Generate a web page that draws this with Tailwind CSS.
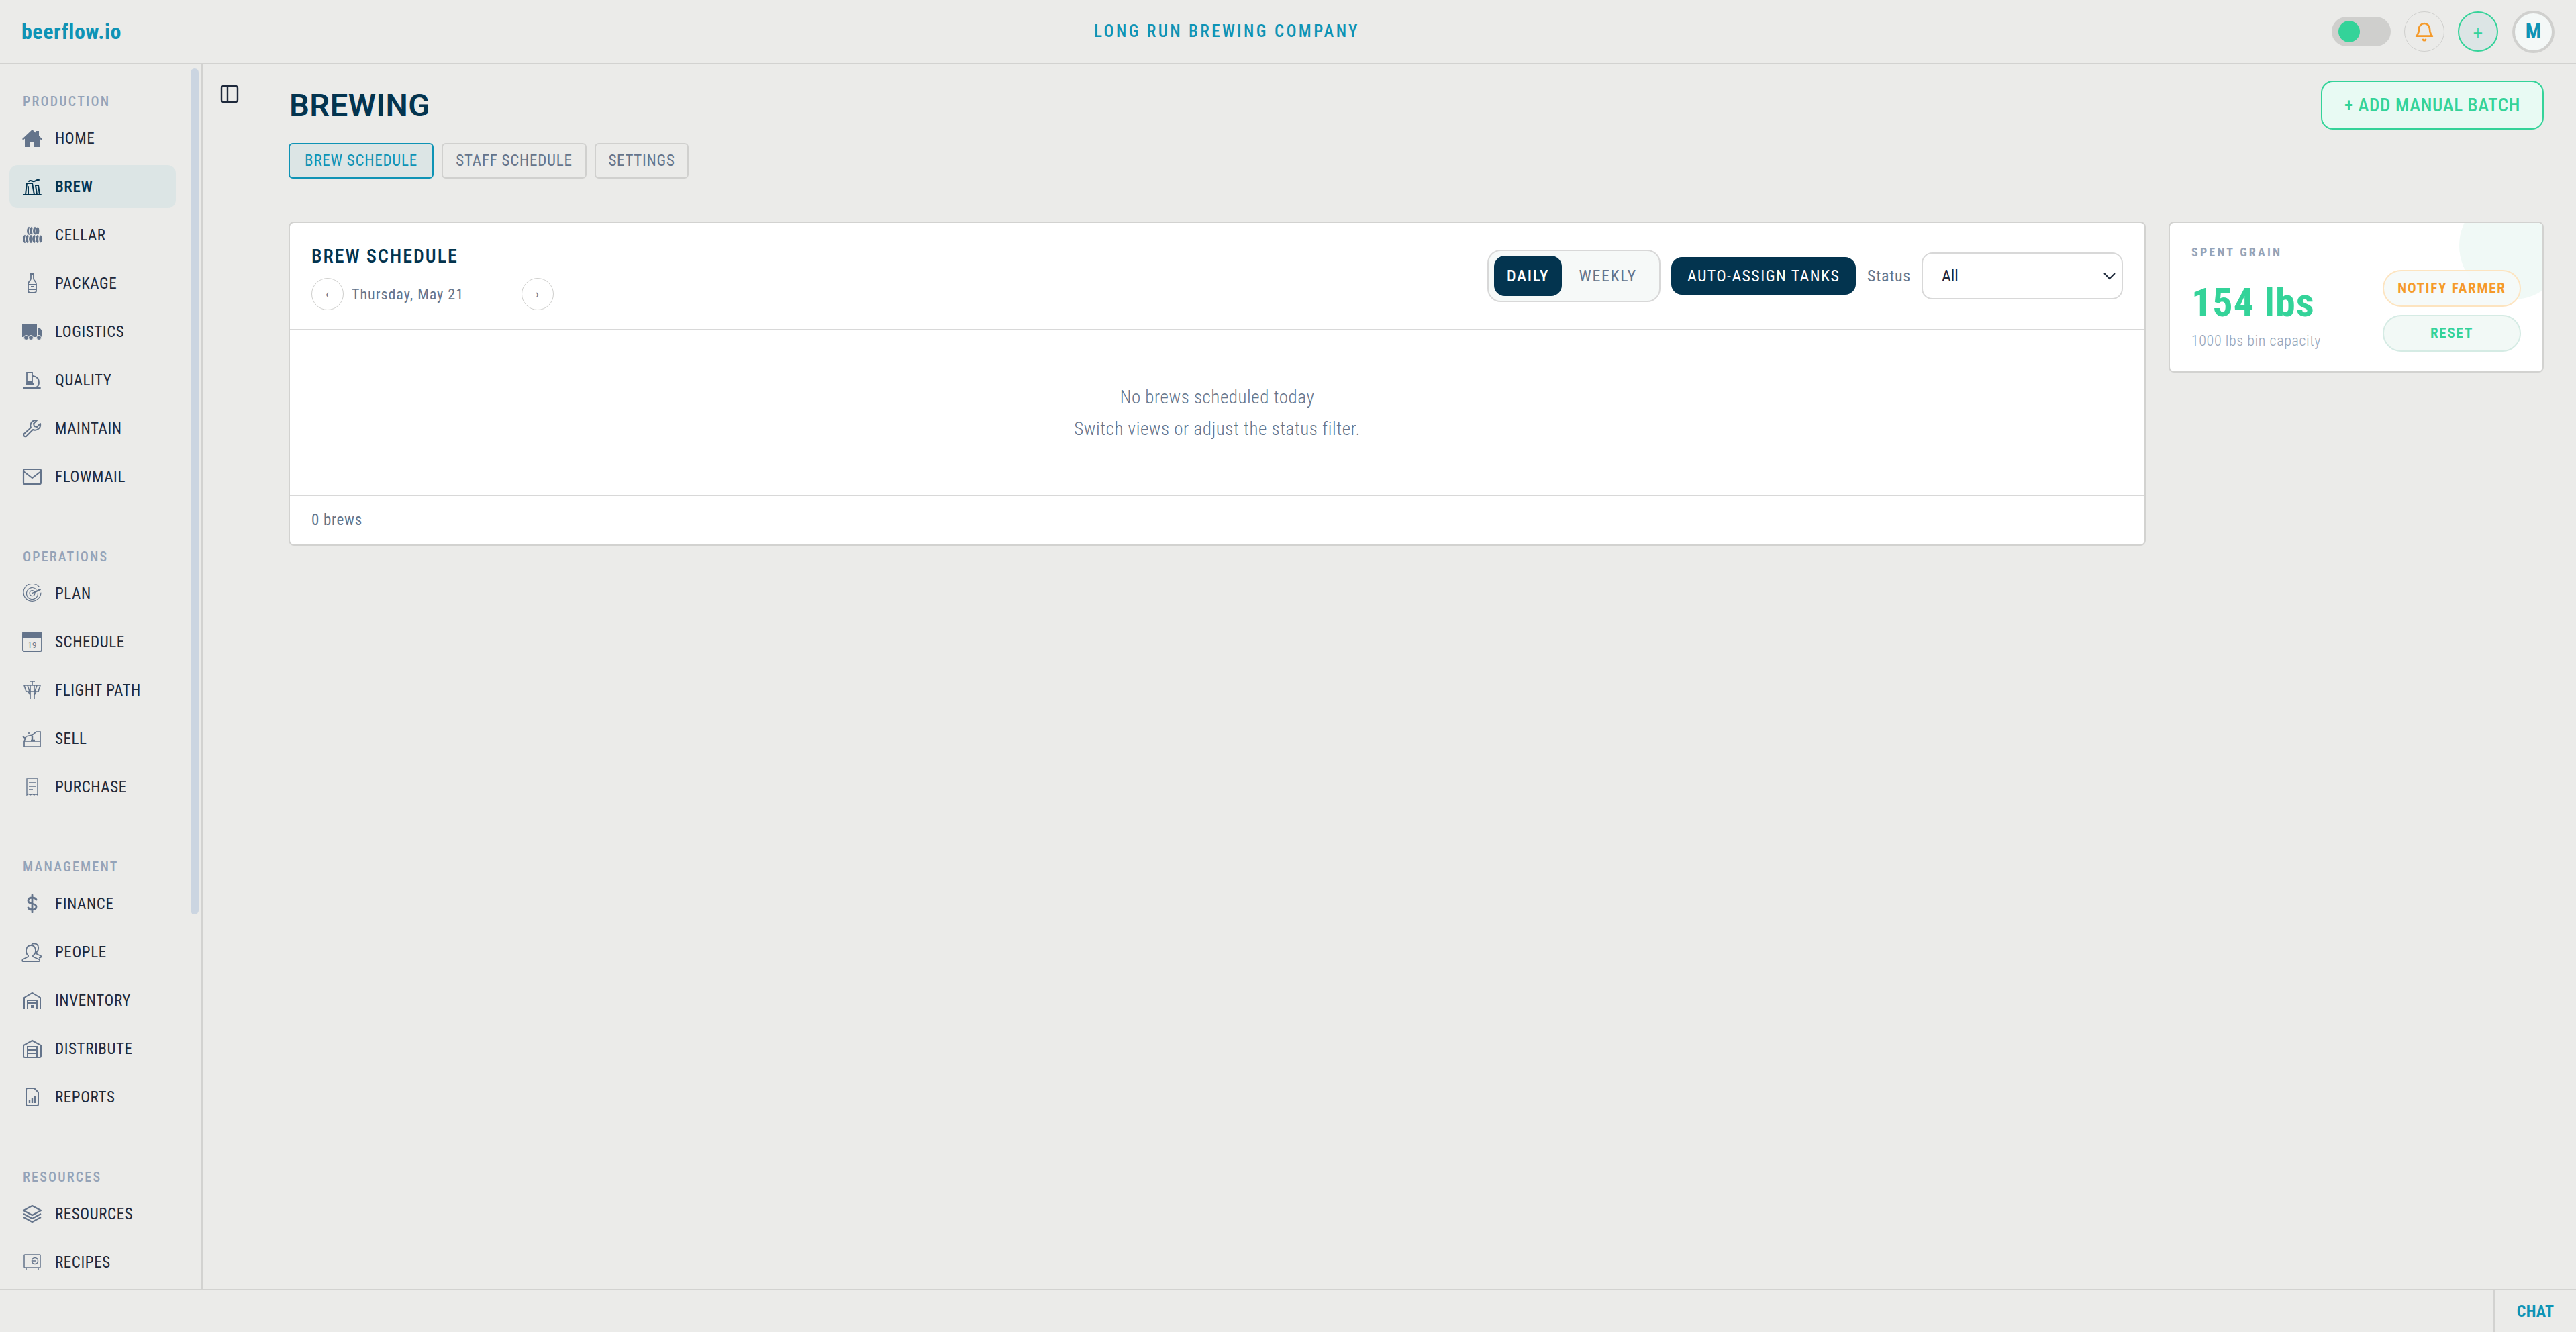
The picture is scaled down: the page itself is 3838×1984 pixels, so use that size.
<!doctype html>
<html lang="en">
<head>
<meta charset="utf-8">
<title>beerflow.io</title>
<script src="https://cdn.jsdelivr.net/npm/@tailwindcss/browser@4"></script>
</head>
<body class="m-0 bg-[#ebebe9] font-['Roboto',sans-serif] font-stretch-[85%] text-[#1e293b]">
<div class="flex h-screen w-screen flex-col overflow-hidden">
  <header class="relative flex h-[96px] shrink-0 items-center justify-between border-b-2 border-[#d2d2d0] pl-[32px] pr-[32px]">
    <div class="text-[32px] font-bold tracking-[0.5px] text-[#0e93b5]">beerflow.io</div>
    <div class="absolute left-[1630px] top-[32px] text-[25px] font-medium leading-[30px] tracking-[3.35px] text-[#0e93b5]">LONG RUN BREWING COMPANY</div>
    <div class="flex items-center">
      <div class="flex h-[44px] w-[88px] items-center rounded-full bg-[#cfcfcd] pl-[10px]"><span class="size-[32px] rounded-full bg-[#34d399]"></span></div>
      <div class="ml-[20px] flex size-[60px] items-center justify-center rounded-full border border-[#cfcfcd]">
        <svg class="size-[32px]" viewBox="0 0 24 24" fill="none" stroke="#f59a2a" stroke-width="2" stroke-linecap="round" stroke-linejoin="round"><path d="M6 9a6 6 0 0 1 12 0c0 6 3 8 3 8H3s3-2 3-8"/><path d="M10.500 21a1.700 1.700 0 0 0 3 0"/></svg>
      </div>
      <div class="ml-[20px] flex size-[60px] items-center justify-center rounded-full border-2 border-[#34d399] bg-[#dce5e5] pt-[4px] text-[30px] font-light leading-none text-[#34d399]">+</div>
      <div class="ml-[21px] flex size-[63px] items-center justify-center rounded-full border-4 border-[#d0d0ce] bg-[#f4f8f7] text-[31px] font-bold text-[#0e93b5]">M</div>
    </div>
  </header>

  <div class="flex min-h-0 flex-1">
    <aside class="relative w-[302px] shrink-0 overflow-hidden border-r-2 border-[#d2d2d0] pt-[42px] text-[#1e293b]">
      <div class="absolute left-[284px] top-[6px] h-[1260px] w-[12px] rounded-full bg-[#cbd5e1]"></div>

      <div class="mb-[10px] pl-[34px] text-[20px] font-medium leading-[26px] tracking-[2.2px] text-[#94a3b8]">PRODUCTION</div>
      <nav class="flex w-[276px] flex-col gap-[8px] text-[23px] leading-none tracking-[0.6px]">
        <a class="mx-[14px] flex h-[64px] items-center rounded-[12px] pl-[18px]">
          <svg class="mr-[18px] h-[28px] w-[32px]" viewBox="0 0 32 28" fill="#64748b"><path d="M16 1 1 15l1.500 1.500L5 14.500V27h8v-8h6v8h8V14.500l2.500 2L31 15l-5-4.700V3h-4v3.500z"/></svg>HOME</a>
        <a class="mx-[14px] flex h-[64px] items-center rounded-[12px] bg-[#dce5e5] pl-[18px] font-medium text-[#03344f]">
          <svg class="mr-[18px] h-[28px] w-[32px]" viewBox="0 0 32 28" fill="none" stroke="#03344f" stroke-width="2" stroke-linecap="round"><path d="M3 26h26M6 26 8 9h8l3 17M23 26l-2-14h4l2 14M10 26V14M11 6c3-3 5 1 8 0s4-3 7-2"/></svg>BREW</a>
        <a class="mx-[14px] flex h-[64px] items-center rounded-[12px] pl-[18px]">
          <svg class="mr-[18px] h-[28px] w-[32px]" viewBox="0 0 32 28" fill="#64748b" stroke="#ebebe9" stroke-width="1.200"><ellipse cx="11" cy="8" rx="3.500" ry="6.500"/><ellipse cx="15" cy="8" rx="3.500" ry="6.500"/><ellipse cx="20" cy="8" rx="3.500" ry="6.500"/><ellipse cx="24" cy="8" rx="3" ry="6"/><ellipse cx="5" cy="20" rx="3.500" ry="6.500"/><ellipse cx="9" cy="20" rx="3.500" ry="6.500"/><ellipse cx="14" cy="20" rx="3.500" ry="6.500"/><ellipse cx="19" cy="20" rx="3.500" ry="6.500"/><ellipse cx="24" cy="20" rx="3.500" ry="6.500"/><ellipse cx="28.500" cy="20" rx="2.800" ry="6"/></svg>CELLAR</a>
        <a class="mx-[14px] flex h-[64px] items-center rounded-[12px] pl-[18px]">
          <svg class="mr-[18px] h-[30px] w-[32px]" viewBox="0 0 32 30" fill="none" stroke="#64748b" stroke-width="1.800"><path d="M13 1h6M14 1v7c0 3-4 4-4 8v10c0 2 1 3 3 3h6c2 0 3-1 3-3V16c0-4-4-5-4-8V1"/><path d="M10 17h12M10 24h12M14 20h4"/></svg>PACKAGE</a>
        <a class="mx-[14px] flex h-[64px] items-center rounded-[12px] pl-[18px]">
          <svg class="mr-[18px] h-[28px] w-[32px]" viewBox="0 0 32 28" fill="#64748b"><path d="M1 2h22v20H1zM24 8h3l4 5v9h-7z"/><circle cx="7" cy="23" r="3.500" stroke="#ebebe9"/><circle cx="14" cy="23" r="3.500" stroke="#ebebe9"/><circle cx="26" cy="23" r="3.500" stroke="#ebebe9"/></svg>LOGISTICS</a>
        <a class="mx-[14px] flex h-[64px] items-center rounded-[12px] pl-[18px]">
          <svg class="mr-[18px] h-[28px] w-[32px]" viewBox="0 0 32 28" fill="none" stroke="#64748b" stroke-width="1.800" stroke-linecap="round"><path d="M3 26h25M8 3h8v14H8zM7 20h11M17 8c6 1 9 5 9 10 0 3-1 5-3 6"/></svg>QUALITY</a>
        <a class="mx-[14px] flex h-[64px] items-center rounded-[12px] pl-[18px]">
          <svg class="mr-[18px] h-[28px] w-[32px]" viewBox="0 0 32 28" fill="none" stroke="#64748b" stroke-width="2" stroke-linejoin="round"><path d="M20 2a8 8 0 0 0-6 11L4 22c-2 2 0 5 3 4l10-10a8 8 0 0 0 11-9l-5 5-4-1-1-4 5-5z"/></svg>MAINTAIN</a>
        <a class="mx-[14px] flex h-[64px] items-center rounded-[12px] pl-[18px]">
          <svg class="mr-[18px] h-[28px] w-[32px]" viewBox="0 0 32 28" fill="none" stroke="#64748b" stroke-width="2.200" stroke-linejoin="round"><rect x="3" y="3" width="26" height="22" rx="2"/><path d="m3 6 13 10L29 6"/></svg>FLOWMAIL</a>
      </nav>

      <div class="mb-[10px] mt-[74px] pl-[34px] text-[20px] font-medium leading-[26px] tracking-[2.2px] text-[#94a3b8]">OPERATIONS</div>
      <nav class="flex w-[276px] flex-col gap-[8px] text-[23px] leading-none tracking-[0.6px]">
        <a class="mx-[14px] flex h-[64px] items-center rounded-[12px] pl-[18px]">
          <svg class="mr-[18px] h-[28px] w-[32px]" viewBox="0 0 32 28" fill="none" stroke="#64748b" stroke-width="1.200" stroke-linecap="round"><path d="M26 4a13 13 0 1 0 3 9M22 8a8.500 8.500 0 1 0 2.500 6M19 11a4 4 0 1 0 1 3"/><path stroke-width="2" d="m16 14 12-6"/></svg>PLAN</a>
        <a class="mx-[14px] flex h-[64px] items-center rounded-[12px] pl-[18px]">
          <svg class="mr-[18px] h-[32px] w-[32px]" viewBox="0 0 32 32" fill="none" stroke="#64748b" stroke-width="1.800"><rect x="2" y="3" width="28" height="27" rx="2"/><path fill="#64748b" d="M2 3h28v6H2z"/><text x="16" y="25" text-anchor="middle" font-size="13" fill="#64748b" stroke="none" font-family="Roboto, sans-serif">19</text></svg>SCHEDULE</a>
        <a class="mx-[14px] flex h-[64px] items-center rounded-[12px] pl-[18px]">
          <svg class="mr-[18px] h-[28px] w-[32px]" viewBox="0 0 32 28" fill="none" stroke="#64748b" stroke-width="1.600"><path d="M12 1h8M16 1v5M4 7h24l-3 9H7zM9 7l3 9M23 7l-3 9M13 7v20M19 7v20M10 16l3 5M22 16l-3 5"/></svg>FLIGHT PATH</a>
        <a class="mx-[14px] flex h-[64px] items-center rounded-[12px] pl-[18px]">
          <svg class="mr-[18px] h-[28px] w-[32px]" viewBox="0 0 32 28" fill="none" stroke="#64748b" stroke-width="1.700"><path d="M4 26h24V18H4zM4 18l3-7 9-2 6-5h6v14M2 11l4 3M11 5v3"/><path stroke-width="2.400" d="M16 11v6h4M14 17h6"/></svg>SELL</a>
        <a class="mx-[14px] flex h-[64px] items-center rounded-[12px] pl-[18px]">
          <svg class="mr-[18px] h-[28px] w-[32px]" viewBox="0 0 32 28" fill="none" stroke="#64748b" stroke-width="1.400"><path d="M8 2h16v24l-2.600-1.500L19 26l-3-1.500L13 26l-2.400-1.500L8 26zM11 8h10M11 13h10M11 18h6"/></svg>PURCHASE</a>
      </nav>

      <div class="mb-[10px] mt-[74px] pl-[34px] text-[20px] font-medium leading-[26px] tracking-[2.2px] text-[#94a3b8]">MANAGEMENT</div>
      <nav class="flex w-[276px] flex-col gap-[8px] text-[23px] leading-none tracking-[0.6px]">
        <a class="mx-[14px] flex h-[64px] items-center rounded-[12px] pl-[18px]">
          <svg class="mr-[18px] h-[28px] w-[32px]" viewBox="0 0 32 28" fill="none" stroke="#64748b" stroke-width="2.800" stroke-linecap="round"><path d="M22 8c-1-2-3-3-6-3-4 0-6 2-6 4.500C10 16 22 12 22 18.500 22 21 20 23 16 23c-3 0-5-1-6-3M16 1v26"/></svg>FINANCE</a>
        <a class="mx-[14px] flex h-[64px] items-center rounded-[12px] pl-[18px]">
          <svg class="mr-[18px] h-[30px] w-[32px]" viewBox="0 0 32 30" fill="none" stroke="#64748b" stroke-width="1.800" stroke-linejoin="round"><path d="M14 5c5 0 7 4 7 8s-2 6-4 7v2l9 4c2 1 1 3 0 3H2c-1 0-1-2 0-3l8-4v-2c-2-1-3-3-3-7 0-5 3-8 7-8z"/><path d="M15 4c2-3 9-2 10 3 1 4-1 7-3 9l1 2 6 3c1 1 1 2-3 3"/></svg>PEOPLE</a>
        <a class="mx-[14px] flex h-[64px] items-center rounded-[12px] pl-[18px]">
          <svg class="mr-[18px] h-[28px] w-[32px]" viewBox="0 0 32 28" fill="none" stroke="#64748b" stroke-width="2"><path d="M4 27V10l12-7 12 7v17M9 27V14h14v13M9 18h14"/><path fill="#64748b" stroke="none" d="M14 21h4v4h-4z"/></svg>INVENTORY</a>
        <a class="mx-[14px] flex h-[64px] items-center rounded-[12px] pl-[18px]">
          <svg class="mr-[18px] h-[28px] w-[32px]" viewBox="0 0 32 28" fill="none" stroke="#64748b" stroke-width="2"><path d="M3 25V9l13-7 13 7v16c0 1-1 2-2 2H5c-1 0-2-1-2-2zM9 27V11h14v16M9 16h14M9 21h14"/></svg>DISTRIBUTE</a>
        <a class="mx-[14px] flex h-[64px] items-center rounded-[12px] pl-[18px]">
          <svg class="mr-[18px] h-[28px] w-[32px]" viewBox="0 0 32 28" fill="none" stroke="#64748b" stroke-width="2"><path d="M7 3c0-1 1-2 2-2h10l6 6v18c0 1-1 2-2 2H9c-1 0-2-1-2-2z"/><path stroke-width="2.400" d="M12 23v-4M16 23v-7M20 23V12"/></svg>REPORTS</a>
      </nav>

      <div class="mb-[10px] mt-[74px] pl-[34px] text-[20px] font-medium leading-[26px] tracking-[2.2px] text-[#94a3b8]">RESOURCES</div>
      <nav class="flex w-[276px] flex-col gap-[8px] text-[23px] leading-none tracking-[0.6px]">
        <a class="mx-[14px] flex h-[64px] items-center rounded-[12px] pl-[18px]">
          <svg class="mr-[18px] h-[28px] w-[32px]" viewBox="0 0 32 28" fill="none" stroke="#64748b" stroke-width="2.200" stroke-linejoin="round"><path d="m16 2 13 7-13 7-13-7zM3 14l13 7 13-7M3 19l13 7 13-7"/></svg>RESOURCES</a>
        <a class="mx-[14px] flex h-[64px] items-center rounded-[12px] pl-[18px]">
          <svg class="mr-[18px] h-[28px] w-[32px]" viewBox="0 0 32 28" fill="none" stroke="#64748b" stroke-width="1.500"><rect x="4" y="3" width="24" height="19" rx="1"/><circle cx="20" cy="12" r="4.500"/><path d="M16 12h5M7 22v3M25 22v3"/></svg>RECIPES</a>
      </nav>
    </aside>

    <main class="flex min-w-0 flex-1">
      <div class="w-[128px] shrink-0 pl-[26px] pt-[30px]">
        <svg class="size-[28px]" viewBox="0 0 28 28" fill="none" stroke="#1e293b" stroke-width="2.400"><rect x="2" y="2" width="24" height="24" rx="3"/><path d="M11 2v24"/></svg>
      </div>
      <div class="min-w-0 flex-1 pr-[48px] pt-[24px]">
        <div class="flex h-[73px] items-center justify-between">
          <h1 class="pl-[1px] text-[47px] font-semibold font-stretch-normal leading-none tracking-[0.5px] text-[#03344f]">BREWING</h1>
          <button class="flex h-[73px] w-[332px] items-center justify-center rounded-[18px] border-2 border-[#34d399] bg-[#e8faf3] pt-[2px] text-[27px] font-medium tracking-[0.65px] text-[#34d399]">+ ADD MANUAL BATCH</button>
        </div>
        <div class="mt-[20px] flex gap-[12px] text-[23px] tracking-[0.75px]">
          <button class="flex h-[53px] w-[216px] items-center justify-center rounded-[6px] border-2 border-[#0e93b5] bg-[#dce5e5] pt-[2px] text-[#0e93b5]">BREW SCHEDULE</button>
          <button class="flex h-[53px] w-[216px] items-center justify-center rounded-[6px] border-2 border-[#d0d0ce] pt-[2px] text-[#64748b]">STAFF SCHEDULE</button>
          <button class="flex h-[53px] w-[140px] items-center justify-center rounded-[6px] border-2 border-[#d0d0ce] pt-[2px] text-[#64748b]">SETTINGS</button>
        </div>
        <div class="mt-[64px] flex items-start gap-[34px]">
          <section class="min-w-0 flex-1 rounded-[8px] border-2 border-[#d2d2d0] bg-white">
            <div class="flex h-[160px] items-center justify-between border-b-2 border-[#d8d8d8] pl-[32px] pr-[32px]">
              <div class="flex flex-col">
                <h2 class="text-[28px] font-medium leading-[43px] tracking-[2px] text-[#03344f]">BREW SCHEDULE</h2>
                <div class="mt-[11px] flex h-[48px] items-center text-[22px] tracking-[1px] text-[#64748b]">
                  <span class="flex size-[48px] items-center justify-center rounded-full border border-[#d0d0ce] text-[18px] leading-none">‹</span>
                  <span class="w-[265px] pl-[12px]">Thursday, May 21</span>
                  <span class="flex size-[48px] items-center justify-center rounded-full border border-[#d0d0ce] text-[18px] leading-none">›</span>
                </div>
              </div>
              <div class="flex items-center text-[24px]">
                <div class="flex h-[78px] w-[258px] items-center rounded-[20px] border-2 border-[#d8d8d8] bg-[#f6f9f8] pl-[8px]">
                  <span class="flex h-[60px] w-[101px] items-center justify-center rounded-[16px] bg-[#03344f] font-medium tracking-[1.6px] text-white">DAILY</span>
                  <span class="flex h-[60px] flex-1 items-center justify-center pr-[8px] tracking-[1.6px] text-[#64748b]">WEEKLY</span>
                </div>
                <span class="ml-[16px] flex h-[56px] w-[275px] items-center justify-center rounded-[16px] bg-[#03344f] tracking-[1.35px] text-white">AUTO-ASSIGN TANKS</span>
                <span class="ml-[17px] tracking-[0.7px] text-[#64748b]">Status</span>
                <div class="relative ml-[16px] flex h-[70px] w-[300px] items-center rounded-[16px] border-2 border-[#d8d8d8] bg-white pl-[28px] text-[#1e293b]">All
                  <svg class="absolute right-[8px] top-[27px] h-[12px] w-[20px]" viewBox="0 0 20 12" fill="none" stroke="#1e293b" stroke-width="2"><path d="m2 2 8 8 8-8"/></svg>
                </div>
              </div>
            </div>
            <div class="flex h-[245px] flex-col items-center justify-center pt-[2px] text-[27px] font-[350] leading-[47px] tracking-[0.56px] text-[#64748b]">
              <p>No brews scheduled today</p>
              <p>Switch views or adjust the status filter.</p>
            </div>
            <div class="flex h-[74px] items-center border-t-2 border-[#d8d8d8] pl-[32px] text-[23px] tracking-[0.7px] text-[#64748b]">0 brews</div>
          </section>

          <section class="relative h-[225px] w-[559px] shrink-0 overflow-hidden rounded-[8px] border-2 border-[#d2d2d0] bg-white">
            <div class="absolute -right-[36px] -top-[46px] size-[160px] rounded-full bg-[#f0f9f6]"></div>
            <div class="relative flex h-full justify-between pl-[32px] pr-[32px]">
              <div class="flex flex-col pt-[32px]">
                <div class="text-[18px] font-bold leading-[24px] tracking-[3.2px] text-[#94a3b8]">SPENT GRAIN</div>
                <div class="mt-[28px] text-[60px] font-bold leading-[70px] tracking-[1px] text-[#34d399]">154 lbs</div>
                <div class="mt-[8px] text-[22px] font-light leading-[28px] tracking-[0.6px] text-[#94a3b8]">1000 lbs bin capacity</div>
              </div>
              <div class="flex flex-col gap-[12px] pt-[70px]">
                <span class="flex h-[55px] w-[206px] items-center justify-center rounded-full border-2 border-[#fde4c0] bg-[#f5f9f8]/90 text-[21px] font-bold tracking-[1.8px] text-[#f59a2a]">NOTIFY FARMER</span>
                <span class="flex h-[55px] w-[206px] items-center justify-center rounded-full border-2 border-[#d5ebe4] bg-[#f2f9f6] text-[21px] font-bold tracking-[1.8px] text-[#34d399]">RESET</span>
              </div>
            </div>
          </section>
        </div>
      </div>
    </main>
  </div>

  <footer class="flex h-[64px] shrink-0 justify-end border-t-2 border-[#d2d2d0]">
    <div class="flex w-[123px] items-center justify-center border-l-2 border-[#d2d2d0] text-[24px] font-bold tracking-[0.2px] text-[#0e93b5]">CHAT</div>
  </footer>
</div>
</body>
</html>
